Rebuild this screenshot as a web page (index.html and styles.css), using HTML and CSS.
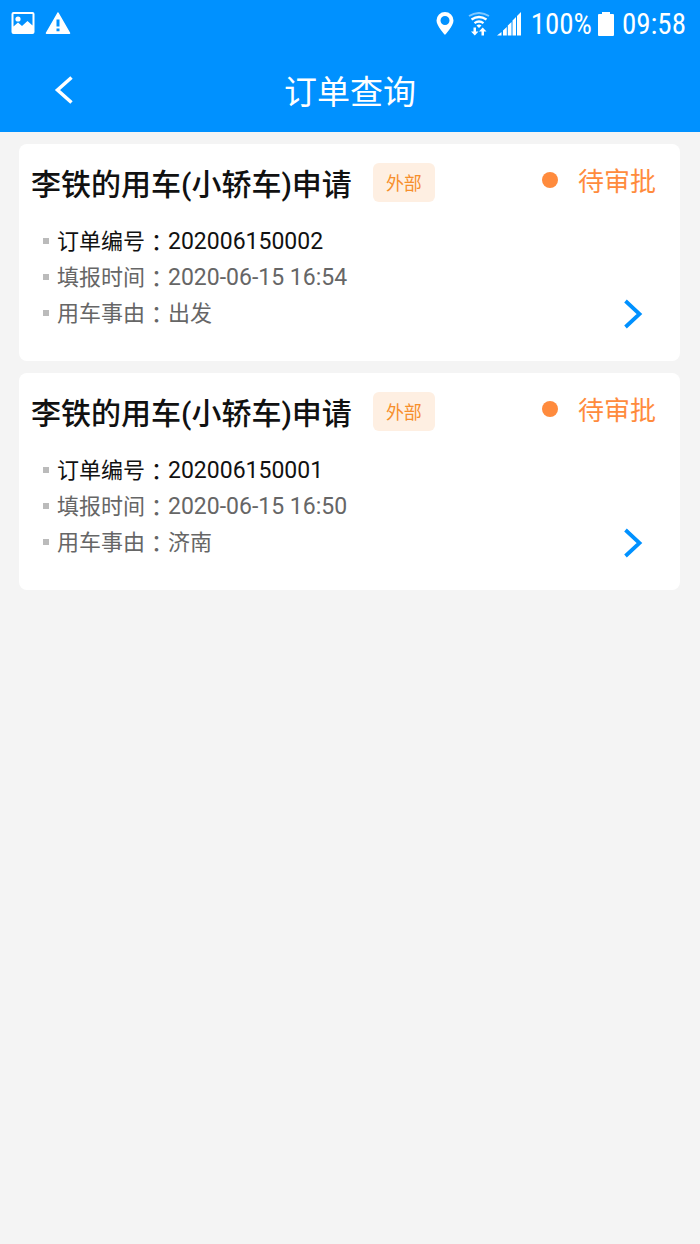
FILE: index.html
```html
<!DOCTYPE html>
<html lang="zh-CN">
<head>
<meta charset="utf-8">
<meta name="viewport" content="width=device-width, initial-scale=1">
<title>订单查询</title>
<link rel="stylesheet" href="styles.css">
</head>
<body>
<header class="top">
  <div class="status-bar">
    <div class="notices">
      <svg width="24" height="24" viewBox="0 0 24 24" aria-hidden="true"><path fill="#fff" fill-rule="evenodd" d="M2.500 0h19A2 2 0 0 1 23.500 2v18a2 2 0 0 1-2 2h-19a2 2 0 0 1-2-2V2a2 2 0 0 1 2-2zM2.500 2v12.500l4.500-4 4 3.500 5.500-5 5 4.500V2z"/><circle cx="7" cy="7" r="2.600" fill="#fff"/></svg>
      <svg width="26" height="24" viewBox="0 0 26 24" aria-hidden="true"><path fill="#fff" stroke="#fff" stroke-width="1.500" stroke-linejoin="round" d="M13 1 1.500 21.200h23z"/><path fill="#0091ff" d="M11.500 7.500h3v7h-3zM11.500 16.500h3v2.800h-3z"/></svg>
    </div>
    <div class="system">
      <svg width="18" height="24" viewBox="0 0 18 24" aria-hidden="true"><path fill="#fff" fill-rule="evenodd" d="M9 0a8.500 8.500 0 0 1 8.500 8.500C17.500 14 9 23 9 23S.5 14 .5 8.500A8.500 8.500 0 0 1 9 0zM9 4a4.500 4.500 0 1 0 0 9 4.500 4.500 0 0 0 0-9z"/></svg>
      <svg class="wifi" width="22" height="24" viewBox="0 0 22 24" aria-hidden="true"><g fill="none" stroke="#fff" stroke-width="2"><path opacity=".5" d="M1 4q10-6 20 0"/><path stroke-width="2.300" d="M3.500 7.500q7.500-5 15 0M6.500 11.200q4.500-3.500 9 0"/></g><path fill="#fff" d="M8.500 13.500q2.500-2 5 0L11 16zM5.500 15.500h2.500v4h2.500L6.800 23.500 3 19.500h2.500zM13.500 23.500v-4H11l3.700-4 3.800 4H16v4z"/></svg>
      <svg class="signal" width="24" height="24" viewBox="0 0 24 24" aria-hidden="true"><path fill="#fff" d="M0 23.500l4.500-3.500v3.500zM6 18.500l3.800-3.500v8.500H6zM10.800 13.500l3.700-3.500v13.500h-3.700zM15.500 8.500l3.500-3.500v18.500h-3.500zM20 4l4-4v23.500h-4z"/></svg>
      <span class="charge">100%</span>
      <svg class="battery" width="16" height="24" viewBox="0 0 16 24" aria-hidden="true"><path fill="#fff" d="M4 0h8v2h3q1 0 1 1v20q0 1-1 1H1q-1 0-1-1V3q0-1 1-1h3z"/></svg>
      <span>09:58</span>
    </div>
  </div>
  <div class="nav-bar">
    <button class="back" type="button" aria-label="返回"><svg width="20" height="28" viewBox="0 0 20 28" aria-hidden="true"><path fill="none" stroke="#fff" stroke-width="3.500" d="M17.500 1.500 3.500 14l14 12.500"/></svg></button>
    <h1>订单查询</h1>
  </div>
</header>
<main class="orders">
  <article class="card">
    <div class="card-head">
      <h2>李铁的用车(小轿车)申请</h2>
      <span class="tag">外部</span>
      <span class="state">待审批</span>
    </div>
    <div class="card-body">
      <ul class="fields">
        <li class="primary">订单编号<span class="colon" lang="zh-TW">：</span><span class="num">202006150002</span></li>
        <li>填报时间<span class="colon" lang="zh-TW">：</span><span class="num">2020-06-15 16:54</span></li>
        <li>用车事由<span class="colon" lang="zh-TW">：</span>出发</li>
      </ul>
      <button class="more" type="button" aria-label="查看详情"><svg width="20" height="30" viewBox="0 0 20 30" aria-hidden="true"><path fill="none" stroke="#0091ff" stroke-width="3.800" d="M2.500 2 16.500 15l-14 13"/></svg></button>
    </div>
  </article>
  <article class="card">
    <div class="card-head">
      <h2>李铁的用车(小轿车)申请</h2>
      <span class="tag">外部</span>
      <span class="state">待审批</span>
    </div>
    <div class="card-body">
      <ul class="fields">
        <li class="primary">订单编号<span class="colon" lang="zh-TW">：</span><span class="num">202006150001</span></li>
        <li>填报时间<span class="colon" lang="zh-TW">：</span><span class="num">2020-06-15 16:50</span></li>
        <li>用车事由<span class="colon" lang="zh-TW">：</span>济南</li>
      </ul>
      <button class="more" type="button" aria-label="查看详情"><svg width="20" height="30" viewBox="0 0 20 30" aria-hidden="true"><path fill="none" stroke="#0091ff" stroke-width="3.800" d="M2.500 2 16.500 15l-14 13"/></svg></button>
    </div>
  </article>
</main>
</body>
</html>
```
FILE: styles.css
```css
* {
  box-sizing: border-box;
}

body {
  margin: 0;
  min-height: 100vh;
  background: #f4f4f4;
  font-family: Roboto, "Noto Sans CJK SC", sans-serif;
}

h1, h2, ul {
  margin: 0;
  padding: 0;
}

svg {
  display: block;
  flex: none;
}

button {
  padding: 0;
  border: 0;
  background: none;
  cursor: pointer;
}

.top {
  background: #0091ff;
  color: #fff;
}

.status-bar {
  display: flex;
  justify-content: space-between;
  align-items: center;
  height: 48px;
  padding: 0 14px 0 11px;
  font-family: "Roboto Condensed", Roboto, sans-serif;
  font-size: 29px;
}

.notices {
  display: flex;
  gap: 10px;
}

.system {
  display: flex;
  align-items: center;
}

.wifi {
  margin-left: 14px;
}

.signal {
  margin-left: 7px;
}

.charge {
  margin-left: 10px;
}

.battery {
  margin: 0 8px 0 6px;
}

.nav-bar {
  display: grid;
  grid-template-columns: 1fr auto 1fr;
  align-items: center;
  height: 84px;
}

.back {
  justify-self: start;
  margin-left: 54px;
}

h1 {
  padding-top: 6px;
  font-size: 33px;
  line-height: 48px;
  font-weight: 400;
}

.orders {
  display: grid;
  gap: 12px;
  padding: 12px 20px 12px 19px;
}

.card {
  padding: 16px 12px 29px;
  border-radius: 8px;
  background: #fff;
}

.card-head {
  display: flex;
  align-items: center;
}

h2 {
  padding-top: 5px;
  color: #111;
  font-size: 30px;
  line-height: 40px;
  font-weight: 500;
}

.tag {
  margin-left: 21px;
  padding: 3px 13px 0;
  border-radius: 6px;
  background: #feefe2;
  color: #f78f2d;
  font-size: 18px;
  line-height: 36px;
}

.state {
  display: flex;
  align-items: center;
  gap: 20px;
  margin-left: auto;
  padding: 0 12px 2px 0;
  color: #ff8b3d;
  font-size: 26px;
  line-height: 40px;
}

.state::before {
  content: "";
  width: 16px;
  height: 16px;
  margin-bottom: 3px;
  border-radius: 50%;
  background: #ff8b3d;
}

.card-body {
  display: flex;
  justify-content: space-between;
  align-items: flex-end;
  margin-top: 19px;
}

.fields {
  list-style: none;
  padding-left: 12px;
}

.fields li {
  display: flex;
  align-items: center;
  color: #666;
  font-size: 22px;
  line-height: 36px;
}

.fields li::before {
  content: "";
  width: 6px;
  height: 6px;
  margin: 0 8px 2px 0;
  background: #bbb;
}

.fields .primary {
  color: #111;
}

.colon {
  padding-bottom: 2px;
  font-family: "Noto Sans CJK TC", sans-serif;
  font-size: 23px;
  line-height: 34px;
}

.num {
  font-size: 23px;
}

.more {
  margin: 0 25px 3px 0;
}
```
